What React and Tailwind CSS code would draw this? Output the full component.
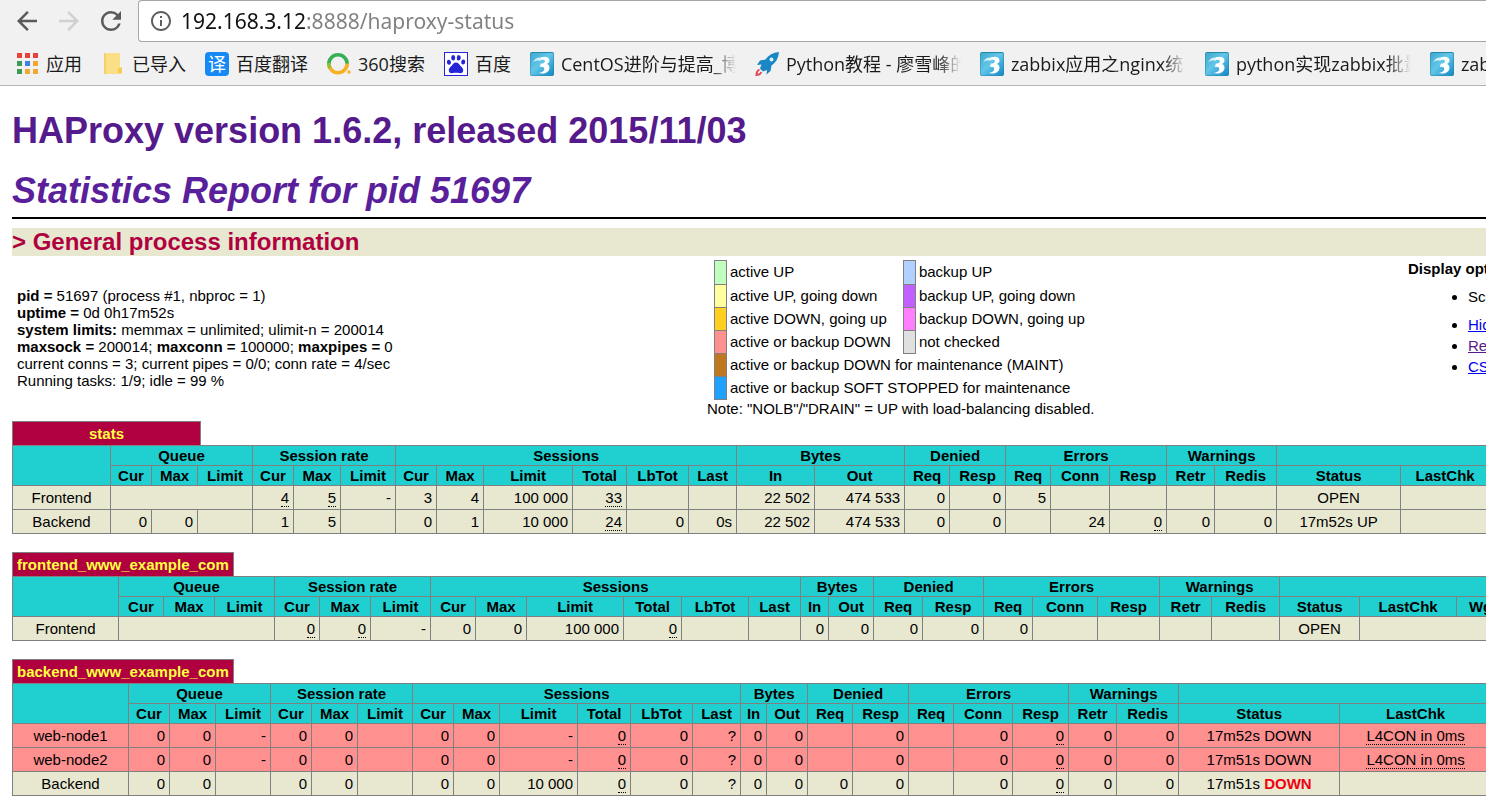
import { MdArrowBack, MdArrowForward, MdInfoOutline, MdRefresh } from 'react-icons/md'

const BOOKMARKS = [
  { icon: AppsIcon, label: '应用' },
  { icon: FolderIcon, label: '已导入' },
  { icon: TranslateIcon, label: '百度翻译' },
  { icon: Search360Icon, label: '360搜索' },
  { icon: BaiduIcon, label: '百度' },
  { icon: BlogIcon, label: 'CentOS进阶与提高_博', long: true },
  { icon: RocketIcon, label: 'Python教程 - 廖雪峰的', long: true },
  { icon: BlogIcon, label: 'zabbix应用之nginx统', long: true },
  { icon: BlogIcon, label: 'python实现zabbix批量', long: true },
  { icon: BlogIcon, label: 'zabbix', long: true },
]

const LEGEND = [
  [['bg-[#c0ffc0]', 'active UP'], ['bg-[#b0d0ff]', 'backup UP']],
  [['bg-[#ffffa0]', 'active UP, going down'], ['bg-[#c060ff]', 'backup UP, going down']],
  [['bg-[#ffd020]', 'active DOWN, going up'], ['bg-[#ff80ff]', 'backup DOWN, going up']],
  [['bg-[#ff9090]', 'active or backup DOWN'], ['bg-[#e0e0e0]', 'not checked']],
  [['bg-[#c07820]', 'active or backup DOWN for maintenance (MAINT)']],
  [['bg-[#20a0ff]', 'active or backup SOFT STOPPED for maintenance']],
]

const GROUPS = [
  ['Queue', ['Cur', 'Max', 'Limit']],
  ['Session rate', ['Cur', 'Max', 'Limit']],
  ['Sessions', ['Cur', 'Max', 'Limit', 'Total', 'LbTot', 'Last']],
  ['Bytes', ['In', 'Out']],
  ['Denied', ['Req', 'Resp']],
  ['Errors', ['Req', 'Conn', 'Resp']],
  ['Warnings', ['Retr', 'Redis']],
]

// '' is an empty cell, { u } a value with a dotted underline, { span } an empty merged cell
const PROXIES = [
  {
    name: 'stats',
    server: ['Status', 'LastChk'],
    widths: [98, 41, 46, 55, 41, 47, 55, 41, 47, 89, 54, 62, 48, 78, 90, 45, 56, 45, 59, 57, 48, 62, 124, 89],
    rows: [
      { cells: ['Frontend', { span: 3 }, { u: '4' }, { u: '5' }, '-', '3', '4', '100 000', { u: '33' }, '', '', '22 502', '474 533', '0', '0', '5', '', '', '', '', 'OPEN', ''] },
      { cells: ['Backend', '0', '0', '', '1', '5', '', '0', '1', '10 000', { u: '24' }, '0', '0s', '22 502', '474 533', '0', '0', '', '24', { u: '0' }, '0', '0', '17m52s UP', ''] },
    ],
  },
  {
    name: 'frontend_www_example_com',
    server: ['Status', 'LastChk', 'Wght'],
    widths: [106, 45, 51, 60, 45, 51, 60, 45, 51, 97, 58, 67, 52, 28, 45, 49, 61, 49, 65, 62, 52, 68, 80, 97, 62],
    rows: [
      { cells: ['Frontend', { span: 3 }, { u: '0' }, { u: '0' }, '-', '0', '0', '100 000', { u: '0' }, '', '', '0', '0', '0', '0', '0', '', '', '', '', 'OPEN', { span: 2 }] },
    ],
  },
  {
    name: 'backend_www_example_com',
    server: ['Status', 'LastChk'],
    widths: [116, 41, 46, 55, 41, 46, 55, 41, 46, 78, 53, 62, 48, 26, 41, 45, 56, 45, 59, 56, 48, 62, 161, 152],
    rows: [
      { down: true, cells: ['web-node1', '0', '0', '-', '0', '0', '', '0', '0', '-', { u: '0' }, '0', '?', '0', '0', '', '0', '', '0', { u: '0' }, '0', '0', '17m52s DOWN', { u: 'L4CON in 0ms' }] },
      { down: true, cells: ['web-node2', '0', '0', '-', '0', '0', '', '0', '0', '-', { u: '0' }, '0', '?', '0', '0', '', '0', '', '0', { u: '0' }, '0', '0', '17m51s DOWN', { u: 'L4CON in 0ms' }] },
      { cells: ['Backend', '0', '0', '', '0', '0', '', '0', '0', '10 000', { u: '0' }, '0', '?', '0', '0', '0', '0', '', '0', { u: '0' }, '0', '0', <>17m51s <b className="text-[#f00010]">DOWN</b></>, ''] },
    ],
  },
]

export default function App() {
  return (
    <div className="min-h-screen overflow-hidden bg-white text-black font-['Liberation_Sans',Arial,sans-serif] text-[15px] leading-[17px]">
      <BrowserBar />
      <main className="pl-3 pt-[25px]">
        <h1 className="text-4xl font-bold text-[#551a8b] whitespace-nowrap">
          <a href="#haproxy">HAProxy version 1.6.2, released 2015/11/03</a>
        </h1>
        <h2 className="mt-5 text-4xl font-bold italic text-[#5a1f9a] whitespace-nowrap">
          <a href="#report">Statistics Report for pid 51697</a>
        </h2>
        <hr className="mt-1.5 border-t-2 border-black" />
        <h3 className="mt-[9px] bg-[#e8e8d0] text-2xl leading-7 font-bold text-[#b00040]">&gt; General process information</h3>
        <section className="mt-1 grid grid-cols-[minmax(0,695fr)_minmax(0,701fr)_minmax(0,78fr)] whitespace-nowrap">
          <ProcessInfo />
          <Legend />
          <DisplayOptions />
        </section>
        <div className="mt-[3px] space-y-[18px]">
          {PROXIES.map(p => <ProxyTable key={p.name} proxy={p} />)}
        </div>
      </main>
    </div>
  )
}

function BrowserBar() {
  return (
    <header className="bg-[#f1f1f1] border-b border-[#b4b4b4] font-['Open_Sans','Noto_Sans_CJK_SC',sans-serif]">
      <div className="flex h-[42px] items-center">
        <nav className="flex w-[138px] shrink-0 items-center gap-3 pl-3">
          <button aria-label="Back" className="text-[#5a5a5a]"><MdArrowBack size={30} /></button>
          <button aria-label="Forward" className="text-[#d0d0d0]"><MdArrowForward size={30} /></button>
          <button aria-label="Reload" className="text-[#5a5a5a]"><MdRefresh size={30} /></button>
        </nav>
        <div className="flex h-full flex-1 items-center gap-2 rounded-l border border-r-0 border-[#a6a6a6] bg-white pl-2.5">
          <MdInfoOutline size={24} className="shrink-0 text-[#5f5f5f]" />
          <input
            aria-label="Address"
            defaultValue="192.168.3.12:8888/haproxy-status"
            className="h-8 min-w-0 flex-1 bg-[linear-gradient(to_right,#111_125px,#808080_125px)] bg-clip-text font-['Noto_Sans',sans-serif] text-[21px] text-transparent outline-none"
          />
        </div>
      </div>
      <nav className="flex h-[43px] items-center gap-[19px] pl-[15px] text-lg text-[#1a1a1a]">
        {BOOKMARKS.map(({ icon: Icon, label, long }, i) => (
          <a key={i} href="#bookmark" className="flex shrink-0 items-center gap-[7px] whitespace-nowrap">
            <Icon />
            <span className={long ? 'w-[175px] overflow-hidden [mask-image:linear-gradient(to_right,black_86%,transparent)]' : ''}>{label}</span>
          </a>
        ))}
      </nav>
    </header>
  )
}

function ProcessInfo() {
  return (
    <p className="pl-[5px] pt-[27px]">
      <b>pid = </b>51697 (process #1, nbproc = 1)<br />
      <b>uptime = </b>0d 0h17m52s<br />
      <b>system limits:</b> memmax = unlimited; ulimit-n = 200014<br />
      <b>maxsock = </b>200014; <b>maxconn = </b>100000; <b>maxpipes = </b>0<br />
      current conns = 3; current pipes = 0/0; conn rate = 4/sec<br />
      Running tasks: 1/9; idle = 99 %
    </p>
  )
}

function Legend() {
  return (
    <div>
      <table className="ml-[7px] border-collapse">
        <tbody>
          {LEGEND.map((row, i) => (
            <tr key={i} className="h-[23px] first:h-6">
              {row.map(([color, label]) => [
                <td key={color} className={`w-3 border border-[#808080] p-0 ${color}`}><span className="block w-[11px]" /></td>,
                <td key={label} colSpan={row.length === 1 ? 3 : 1} className="pl-[3px] pr-3 pb-0.5">{label}</td>,
              ])}
            </tr>
          ))}
        </tbody>
      </table>
      <p className="leading-[18px]">Note: "NOLB"/"DRAIN" = UP with load-balancing disabled.</p>
    </div>
  )
}

function DisplayOptions() {
  return (
    <div>
      <b>Display option:</b>
      <ul className="mt-[9px] list-disc pl-[60px] leading-[21px]">
        <li className="mb-[7px]">Scope :</li>
        <li><a href="#hide" className="text-[#0000ee] underline">Hide 'DOWN' servers</a></li>
        <li><a href="#refresh" className="text-[#551a8b] underline">Refresh now</a></li>
        <li><a href="#csv" className="text-[#0000ee] underline">CSV export</a></li>
      </ul>
    </div>
  )
}

function ProxyTable({ proxy }) {
  const { name, server, widths, rows } = proxy
  const th = 'border border-[#808080] p-0 font-bold'
  return (
    <section>
      <h4 className="flex h-6 w-fit min-w-[189px] items-center justify-center border border-b-0 border-[#808080] bg-[#b00040] px-1 font-bold text-[#ffff40]">{name}</h4>
      <table className="w-full table-fixed border-collapse whitespace-nowrap">
        <colgroup>
          {widths.map((w, i) => <col key={i} style={{ width: w }} />)}
        </colgroup>
        <thead className="bg-[#20d0d0]">
          <tr className="h-5">
            <th rowSpan={2} className={th} />
            {GROUPS.map(([title, cols]) => <th key={title} colSpan={cols.length} className={th}>{title}</th>)}
            <th colSpan={server.length} className={th} />
          </tr>
          <tr className="h-5">
            {[...GROUPS.flatMap(g => g[1]), ...server].map((c, i) => <th key={i} className={th}>{c}</th>)}
          </tr>
        </thead>
        <tbody>
          {rows.map((row, i) => (
            <tr key={i} className={`h-6 ${row.down ? 'bg-[#ff9090]' : 'bg-[#e8e8d0]'}`}>
              {row.cells.map((cell, j) => <Cell key={j} cell={cell} center={j === 0 || j >= row.cells.length - 2} />)}
            </tr>
          ))}
        </tbody>
      </table>
    </section>
  )
}

function Cell({ cell, center }) {
  return (
    <td colSpan={cell.span} className={`border border-[#808080] px-1 py-0 ${center ? 'text-center' : 'text-right'}`}>
      {cell.u ? <u className="border-b border-dotted border-black no-underline">{cell.u}</u> : cell.span ? null : cell}
    </td>
  )
}

function AppsIcon() {
  const colors = ['#e8413c', '#e8413c', '#e8413c', '#3c9b56', '#3f7fe8', '#f0a830', '#3c9b56', '#f0a830', '#f0a830']
  return (
    <svg width="24" height="24" viewBox="0 0 24 24">
      {colors.map((c, i) => <rect key={i} x={2 + (i % 3) * 8} y={1 + Math.floor(i / 3) * 8} width="5" height="5" fill={c} />)}
    </svg>
  )
}

function FolderIcon() {
  return (
    <svg width="24" height="24" viewBox="0 0 24 24">
      <path d="M3 1h16v14h2v7H3z" fill="#fbdf87" />
      <path d="M3 1h2v21H3z" fill="#f3d06c" />
      <path d="M17 16h4v5h-4z" fill="#f5cb58" />
    </svg>
  )
}

function TranslateIcon() {
  return (
    <span className="flex size-6 items-center justify-center rounded bg-[#1689f5] text-lg leading-6 text-white">译</span>
  )
}

function Search360Icon() {
  return (
    <svg width="24" height="24" viewBox="0 0 24 24" fill="none" strokeWidth="3.6">
      <path d="M1.800 12a9.200 9.200 0 1 1 18.400 0" stroke="#35b055" />
      <path d="M1.800 11.500a9.200 9.200 0 0 0 18.400 0" stroke="#f8b024" />
      <path d="M1.800 11.500a9.200 9.200 0 0 0 1.200 4.500" stroke="#8fbf3c" />
      <circle cx="22" cy="20" r="1.700" fill="#f8b024" />
    </svg>
  )
}

function BaiduIcon() {
  return (
    <svg width="24" height="24" viewBox="0 0 24 24" fill="#2424d8">
      <rect x=".5" y=".5" width="23" height="23" fill="#fff" stroke="#2424d8" />
      <ellipse cx="4.900" cy="10.300" rx="2" ry="2.500" transform="rotate(-12 4.900 10.300)" />
      <ellipse cx="9.200" cy="5.800" rx="2" ry="2.700" />
      <ellipse cx="14.800" cy="5.800" rx="2" ry="2.700" transform="rotate(8 14.800 5.800)" />
      <ellipse cx="19.200" cy="10" rx="2" ry="2.500" transform="rotate(12 19.200 10)" />
      <path d="M12 10.500c2.200 0 3 1.800 4.300 3.200 1.500 1.500 3.200 2.700 2.900 5-.3 2.200-2.200 2.700-4 2.400-2.200-.4-4.200-.4-6.400 0-1.800.3-3.700-.2-4-2.400-.3-2.300 1.400-3.500 2.900-5C9 12.300 9.800 10.500 12 10.500z" />
    </svg>
  )
}

function BlogIcon() {
  return (
    <svg width="24" height="24" viewBox="0 0 24 24">
      <defs>
        <linearGradient id="blog" x1="0" y1="0" x2="1" y2="1">
          <stop offset="0" stopColor="#3fa8cc" />
          <stop offset=".45" stopColor="#62c6e8" />
          <stop offset="1" stopColor="#1287c4" />
        </linearGradient>
      </defs>
      <rect width="24" height="24" rx="2" fill="#2587ab" />
      <rect x=".5" y="1" width="23" height="22.500" rx="1.500" fill="url(#blog)" />
      <path d="M3 10.500C4.500 7 7.500 5 12 5.500l-1.500 3.500C8 8 5.500 8.500 3 10.500z" fill="#d8f2fb" />
      <path d="M11 5.500c4-1.500 8.500-.5 8.500 3 0 1.700-1 2.700-2.500 3.400 2 .8 2.800 2.300 2.400 4.500C18.700 20.500 14 22.500 8.500 21c3-.6 5.500-1.700 5.800-3.800.3-1.900-1.700-2.700-4.600-2.400l1.300-3.200c2 0 3.900-.9 3.900-2.300 0-1.500-1.900-1.800-4.400-1.300z" fill="#fff" />
    </svg>
  )
}

function RocketIcon() {
  return (
    <svg width="24" height="24" viewBox="0 0 24 24">
      <path d="M24 0C18 .5 13.500 3 10.500 7.500L5 8.500 2 13l4.500-.5-1.500 4 3 3 4-1.500-.5 4.500L15.500 19l1-5.500C21 10.500 23.500 6 24 0z" fill="#1b86c4" />
      <circle cx="16.500" cy="7.500" r="2" fill="#d7effa" />
      <path d="M4.500 17C1.500 17.500.5 20 .5 24c3.500 0 6-1 6.500-4l-1.500-.3c-.4 1.300-1.400 1.900-2.900 2.100.1-1.700.8-2.700 2.200-3.200z" fill="#e0455a" />
    </svg>
  )
}
